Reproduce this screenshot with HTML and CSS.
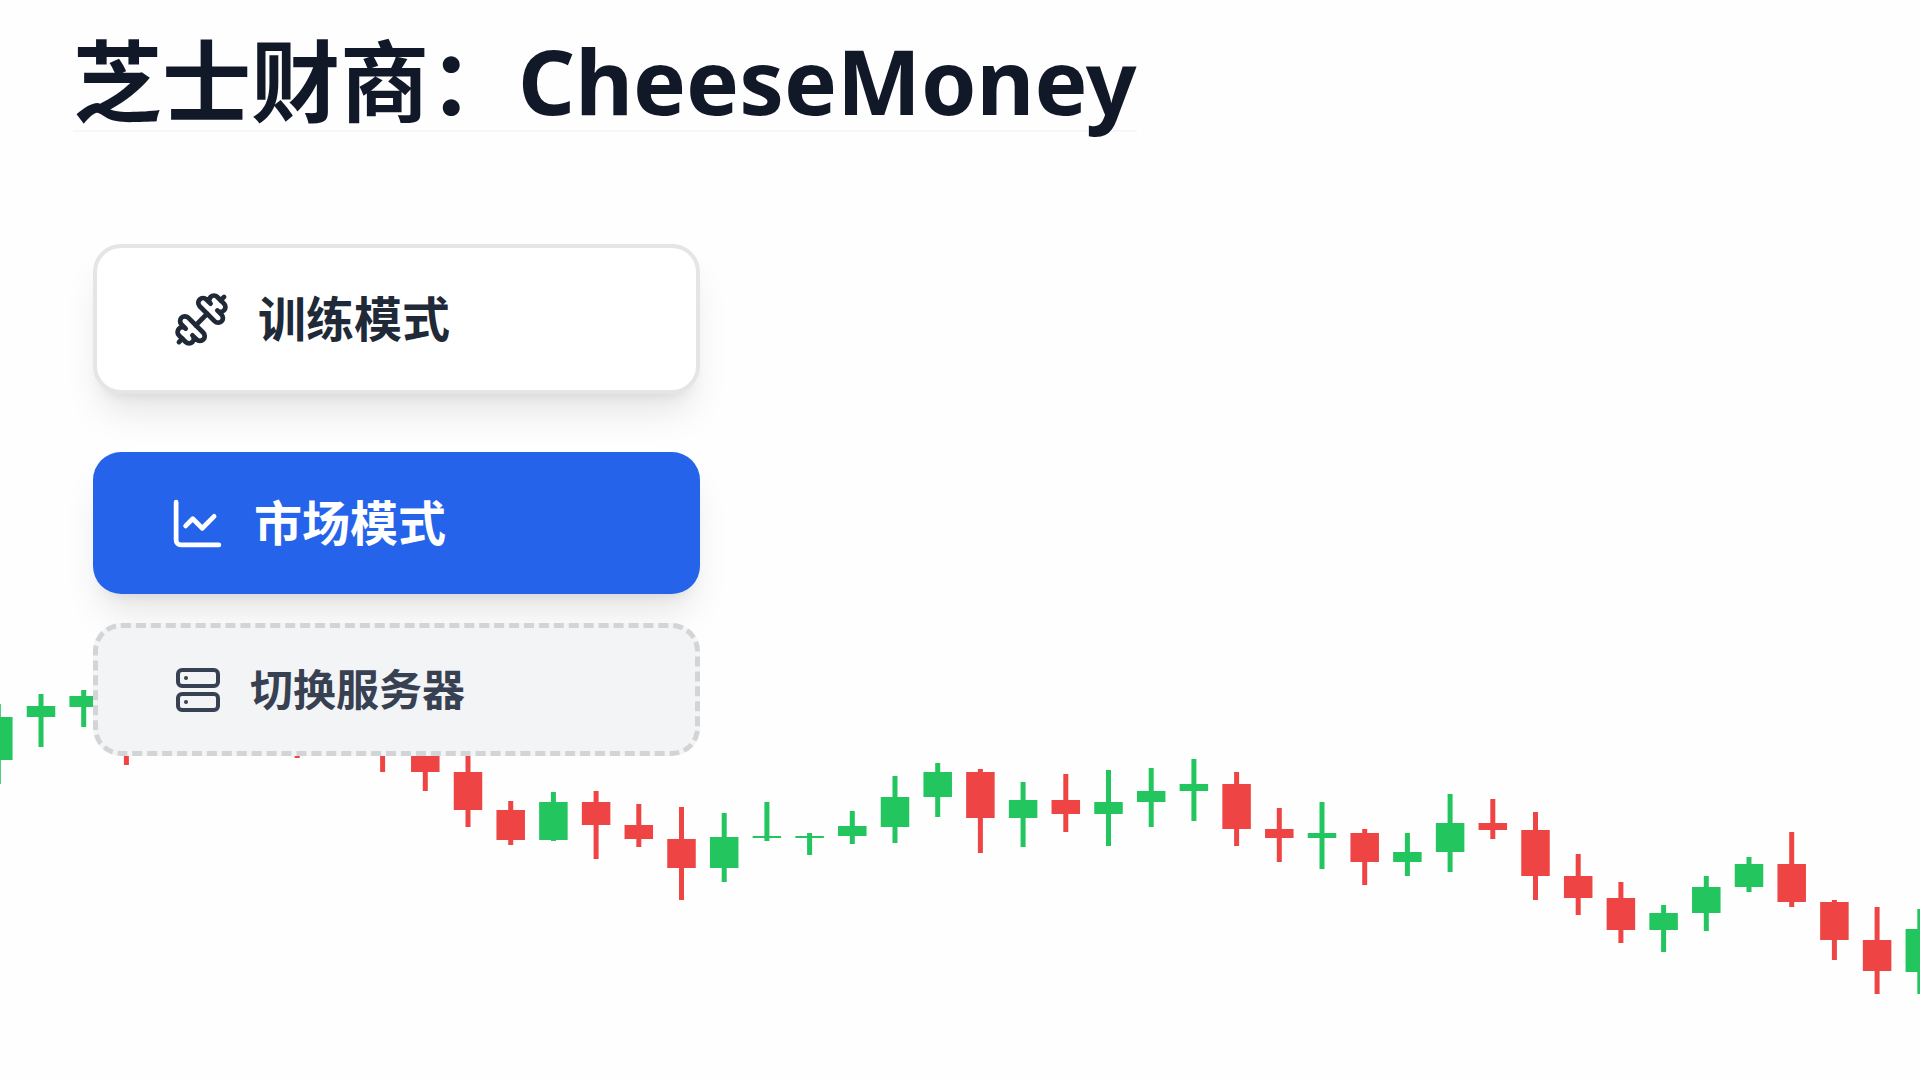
FILE: index.html
```
<!DOCTYPE html>
<html lang="zh-CN">
<head>
    <meta charset="UTF-8">
    <meta name="viewport" content="width=device-width, initial-scale=1.0">
    <title>芝士财商：CheeseMoney</title>
    <link rel="stylesheet" href="styles.css">
</head>
<body>
    <svg id="candles" class="chart" viewBox="0 0 1920 1080" preserveAspectRatio="xMinYMin slice" aria-hidden="true"></svg>

    <main class="home">
        <h1 class="title">芝士财商：CheeseMoney</h1>

        <nav class="menu">
            <button type="button" class="menu-btn btn-training">
                <svg class="icon" viewBox="0 0 24 24">
                    <path d="M17.596 12.768a2 2 0 1 0 2.829-2.829l-1.768-1.767a2 2 0 0 0 2.828-2.829l-2.828-2.828a2 2 0 0 0-2.829 2.828l-1.767-1.768a2 2 0 1 0-2.829 2.829z"/>
                    <path d="m2.5 21.5 1.4-1.4"/>
                    <path d="m20.1 3.9 1.4-1.4"/>
                    <path d="M5.343 21.485a2 2 0 1 0 2.829-2.828l1.767 1.768a2 2 0 1 0 2.829-2.829l-6.364-6.364a2 2 0 1 0-2.829 2.829l1.768 1.767a2 2 0 0 0-2.828 2.829z"/>
                    <path d="m9.6 14.4 4.8-4.8"/>
                </svg>
                <span>训练模式</span>
            </button>

            <button type="button" class="menu-btn btn-market">
                <svg class="icon" viewBox="0 0 24 24">
                    <path d="M3 3v16a2 2 0 0 0 2 2h16"/>
                    <path d="m19 9-5 5-4-4-3 3"/>
                </svg>
                <span>市场模式</span>
            </button>

            <button type="button" class="menu-btn btn-server">
                <svg class="icon" viewBox="0 0 24 24">
                    <rect x="2" y="2" width="20" height="8" rx="2"/>
                    <rect x="2" y="14" width="20" height="8" rx="2"/>
                    <path d="M6 6h.01"/>
                    <path d="M6 18h.01"/>
                </svg>
                <span>切换服务器</span>
            </button>
        </nav>
    </main>

    <script>
        // [direction, high, body top, body bottom, low]
        const candles = [
            ['up', 704, 717, 760, 784], ['up', 694, 706, 717, 747], ['up', 690, 696, 707, 727],
            ['down', 700, 707, 740, 765], ['up', 690, 705, 740, 750], ['up', 680, 690, 705, 730],
            ['down', 680, 690, 715, 740], ['down', 700, 715, 735, 758], ['up', 700, 710, 735, 750],
            ['down', 700, 710, 745, 772], ['down', 730, 745, 772, 791], ['down', 745, 772, 810, 827],
            ['down', 801, 810, 840, 845], ['up', 792, 802, 840, 841], ['down', 791, 802, 825, 859],
            ['down', 804, 825, 839, 847], ['down', 807, 839, 868, 900], ['up', 813, 837, 868, 882],
            ['up', 802, 836, 838, 841], ['up', 833, 836, 838, 855], ['up', 811, 826, 836, 844],
            ['up', 776, 797, 827, 843], ['up', 763, 772, 797, 817], ['down', 769, 772, 818, 853],
            ['up', 782, 800, 818, 847], ['down', 774, 800, 814, 832], ['up', 770, 802, 814, 846],
            ['up', 768, 791, 802, 827], ['up', 759, 784, 791, 821], ['down', 772, 784, 829, 846],
            ['down', 808, 829, 838, 862], ['up', 802, 833, 838, 869], ['down', 829, 833, 862, 885],
            ['up', 833, 852, 862, 876], ['up', 794, 823, 852, 872], ['down', 799, 823, 830, 839],
            ['down', 812, 830, 876, 900], ['down', 854, 876, 898, 915], ['down', 882, 898, 930, 943],
            ['up', 905, 913, 930, 952], ['up', 876, 887, 913, 931], ['up', 857, 864, 887, 892],
            ['down', 832, 864, 902, 907], ['down', 900, 902, 940, 960], ['down', 907, 940, 971, 994],
            ['up', 909, 929, 972, 994]
        ];

        const step = 42.7;
        const startX = -1.7;
        const bodyWidth = 28.5;

        document.getElementById('candles').innerHTML = candles.map(([dir, high, top, bottom, low], i) => {
            const x = startX + i * step;
            return `
                <g class="${dir}">
                    <line x1="${x}" y1="${high}" x2="${x}" y2="${low}"/>
                    <rect x="${x - bodyWidth / 2}" y="${top}" width="${bodyWidth}" height="${bottom - top}"/>
                </g>
            `;
        }).join('');
    </script>
</body>
</html>
```
FILE: styles.css
```
* {
    box-sizing: border-box;
}

body {
    margin: 0;
    min-height: 100vh;
    background-color: #fefefe;
    font-family: "Noto Sans", "Noto Sans CJK SC", sans-serif;
}

/* Candlestick backdrop */
.chart {
    position: absolute;
    top: 0;
    left: 0;
    width: 100%;
    height: 100%;
}

.chart line {
    stroke-width: 5;
}

.up {
    fill: #22c55e;
    stroke: #22c55e;
}

.down {
    fill: #ef4444;
    stroke: #ef4444;
}

.chart rect {
    stroke: none;
}

.home {
    position: relative;
    padding: 32px 73px;
}

.title {
    display: inline-block;
    margin: 0;
    border-bottom: 2px solid #f7f7f8;
    color: #111827;
    font-size: 89px;
    font-weight: 700;
    line-height: 98px;
}

.menu {
    display: flex;
    flex-direction: column;
    max-width: 647px;
    padding: 112px 20px 0;
}

.menu-btn {
    display: flex;
    align-items: center;
    gap: 28px;
    height: 142px;
    padding: 0 76px;
    border: none;
    border-radius: 28px;
    font-family: inherit;
    font-size: 48px;
    font-weight: 700;
    line-height: 56px;
    cursor: pointer;
}

.icon {
    flex: none;
    width: 57px;
    height: 57px;
    fill: none;
    stroke: currentColor;
    stroke-width: 2;
    stroke-linecap: round;
    stroke-linejoin: round;
}

.btn-training {
    height: 150px;
    margin-bottom: 58px;
    border: 4px solid #e5e5e5;
    background-color: #fff;
    color: #1f2937;
    box-shadow: 0 24px 36px -7px rgba(0,0,0,0.1), 0 10px 14px -10px rgba(0,0,0,0.1);
}

.btn-market {
    margin-bottom: 29px;
    background-color: #2563eb;
    color: #fff;
    box-shadow: 0 24px 36px -7px rgba(0,0,0,0.1), 0 10px 14px -10px rgba(0,0,0,0.1);
}

.btn-server {
    height: 133px;
    border: 5px dashed #d3d4d6;
    background-color: #f3f4f6;
    color: #374151;
    font-size: 43px;
}

.btn-server .icon {
    width: 48px;
    height: 48px;
}
```
